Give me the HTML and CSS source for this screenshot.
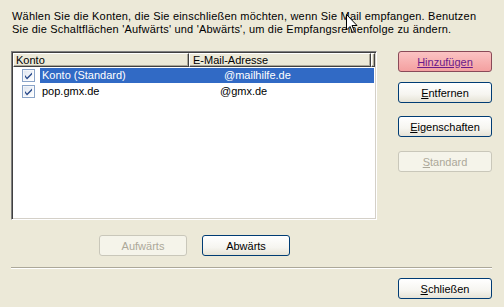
FILE: index.html
```html
<!DOCTYPE html>
<html>
<head>
<meta charset="utf-8">
<link rel="stylesheet" href="styles.css">
</head>
<body>
<div class="dialog">
  <p class="intro">Wählen Sie die Konten, die Sie einschließen möchten, wenn Sie Mail empfangen. Benutzen<br>Sie die Schaltflächen 'Aufwärts' und 'Abwärts', um die Empfangsreihenfolge zu ändern.</p>
  <div class="main">
    <div class="left">
      <div class="list">
        <div class="header">
          <div class="hcell c1">Konto</div>
          <div class="hcell c2">E-Mail-Adresse</div>
          <div class="hcell c3"></div>
        </div>
        <div class="row">
          <span class="chk"><svg width="13" height="13" viewBox="0 0 13 13"><defs><linearGradient id="g" x1="0" y1="0" x2="1" y2="1"><stop offset="0" stop-color="#dfe6f0"/><stop offset="1" stop-color="#fff"/></linearGradient></defs><rect x="0.5" y="0.5" width="12" height="12" fill="#fff" stroke="#8aa4c8"/><rect x="1.5" y="1.5" width="10" height="10" fill="url(#g)"/><path d="M3 6 L5 8.5 L10 3.5 L10 5.5 L5 10.5 L3 8 Z" fill="#2a4a8a"/></svg></span>
          <span class="sel"><span class="name">Konto (Standard)</span><span class="mail m1">@mailhilfe.de</span></span>
        </div>
        <div class="row">
          <span class="chk"><svg width="13" height="13" viewBox="0 0 13 13"><rect x="0.5" y="0.5" width="12" height="12" fill="#fff" stroke="#8aa4c8"/><rect x="1.5" y="1.5" width="10" height="10" fill="url(#g)"/><path d="M3 6 L5 8.5 L10 3.5 L10 5.5 L5 10.5 L3 8 Z" fill="#2a4a8a"/></svg></span>
          <span class="plain"><span class="name">pop.gmx.de</span><span class="mail m2">@gmx.de</span></span>
        </div>
      </div>
      <div class="updown">
        <button class="btn disabled">Aufwärts</button>
        <button class="btn">Abwärts</button>
      </div>
    </div>
    <div class="side">
      <button class="btn hot b1"><u>Hinzufügen</u></button>
      <button class="btn b2"><u>E</u>ntfernen</button>
      <button class="btn b3"><u>E</u>igenschaften</button>
      <button class="btn disabled b4"><u>S</u>tandard</button>
    </div>
  </div>
  <div class="sep"></div>
  <div class="footer">
    <button class="btn"><u>S</u>chließen</button>
  </div>
  <svg class="cursor" width="12" height="20" viewBox="0 0 12 20"><path d="M0.5 0.5 L0.5 16 L4 12.5 L6.5 18.5 L8.5 17.5 L6 11.5 L11 11.5 Z" fill="#fff" stroke="#000" stroke-width="1"/></svg>
</div>
</body>
</html>
```
FILE: styles.css
```css
html, body {
  margin: 0;
  padding: 0;
}
body {
  background: #ECE9D8;
  font-family: "Liberation Sans", Arial, sans-serif;
  font-size: 11px;
  color: #000;
  width: 504px;
  height: 307px;
  overflow: hidden;
}
.dialog {
  position: relative;
  width: 504px;
  height: 307px;
  box-sizing: border-box;
  padding: 10px 12px 0 11px;
}
.intro {
  margin: 0 0 0 1px;
  line-height: 13px;
  height: 26px;
  white-space: nowrap;
  letter-spacing: 0.2px;
}
.main {
  display: flex;
  margin-top: 15px;
}
.left {
  width: 366px;
}
.list {
  width: 366px;
  height: 169px;
  box-sizing: border-box;
  background: #fff;
  border-top: 1px solid #808080;
  border-left: 1px solid #808080;
  border-right: 1px solid #fff;
  border-bottom: 1px solid #fff;
  box-shadow: inset 1px 1px 0 #404040, inset -1px -1px 0 #d4d0c8;
  padding: 1px;
}
.header {
  display: flex;
  height: 14px;
  line-height: 14px;
}
.hcell {
  background: #ECE9D8;
  box-sizing: border-box;
  border-top: 1px solid #fff;
  border-left: 1px solid #fff;
  border-right: 1px solid #404040;
  border-bottom: 1px solid #404040;
  box-shadow: inset -1px -1px 0 #aca899;
  padding-left: 2px;
  line-height: 12px;
  white-space: nowrap;
}
.c1 { width: 178px; }
.c2 { width: 184px; padding-left: 3px; }
.c3 { flex: 1; }
.row {
  display: flex;
  align-items: center;
  height: 16px;
}
.row:first-of-type { margin-top: 1px; }
.chk {
  width: 13px;
  height: 13px;
  margin-left: 9px;
  margin-right: 5px;
  display: block;
}
.chk svg { display: block; }
.sel, .plain {
  flex: 1;
  display: flex;
  height: 15px;
  line-height: 15px;
  margin-right: 1px;
}
.sel {
  background: #316AC5;
  color: #fff;
}
.name {
  width: 182px;
  padding-left: 2px;
}
.m2 { margin-left: -4px; }
.updown {
  display: flex;
  gap: 15px;
  margin-top: 15px;
  margin-left: 88px;
}
.updown .btn { width: 88px; }
.side {
  display: flex;
  flex-direction: column;
  margin-left: 21px;
}
.btn {
  display: block;
  font-family: inherit;
  font-size: 11px;
  width: 94px;
  height: 21px;
  padding: 0;
  box-sizing: border-box;
  border: 1px solid #003C74;
  border-radius: 3px;
  background: linear-gradient(#fff 0%, #f6f5f0 60%, #e6e3d6 100%);
  color: #000;
  text-align: center;
}
.btn u { text-decoration: underline; }
.btn.hot {
  background: linear-gradient(#fbc3c3, #f4a0a0);
  border-color: #8a4a58;
  color: #6b1a8a;
}
.btn.disabled {
  border-color: #c9c7ba;
  background: #f5f4ea;
  color: #aca899;
}
.b2 { margin-top: 10px; }
.b3 { margin-top: 13px; }
.b4 { margin-top: 14px; }
.sep {
  margin-top: 11px;
  width: 481px;
  height: 0;
  border-top: 1px solid #aca899;
  border-bottom: 1px solid #fff;
}
.footer {
  display: flex;
  justify-content: flex-end;
  margin-top: 9px;
}
.cursor {
  position: absolute;
  left: 346px;
  top: 14px;
}
```
